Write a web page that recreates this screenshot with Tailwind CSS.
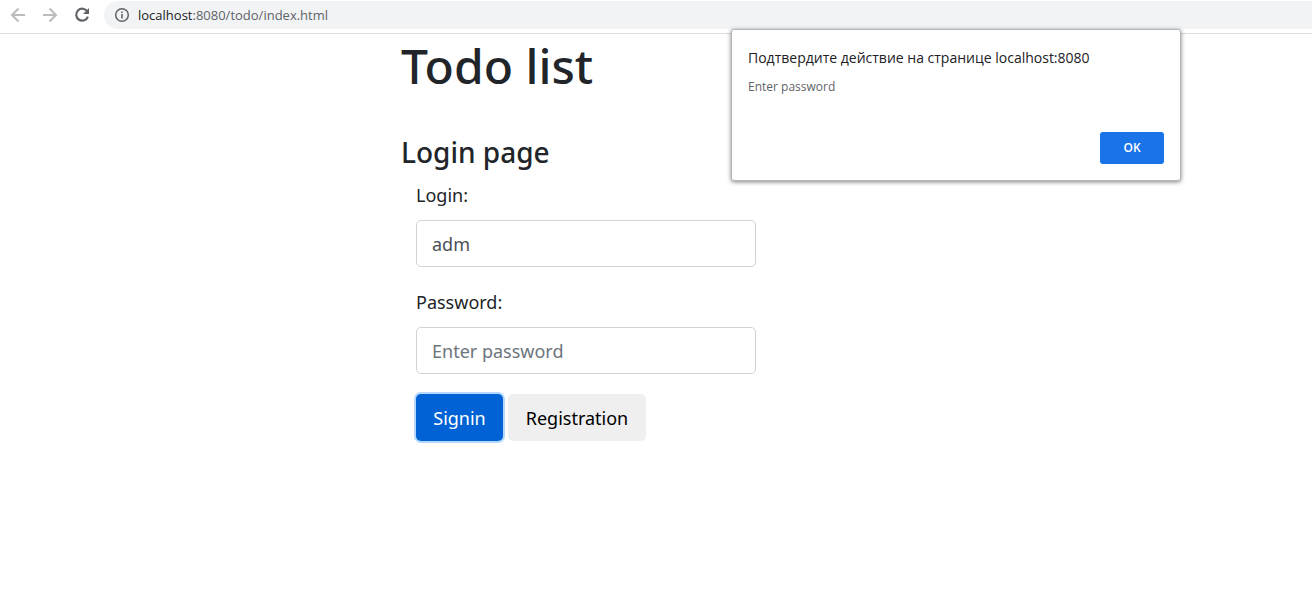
<!DOCTYPE html>
<html lang="en">
<head>
<meta charset="utf-8">
<meta name="viewport" content="width=device-width, initial-scale=1">
<title>Todo list</title>
<script src="https://cdn.jsdelivr.net/npm/@tailwindcss/browser@4"></script>
</head>
<body class="relative min-h-screen bg-white font-['Open_Sans','Noto_Sans',sans-serif] text-[#212529]">
<header class="flex h-[34px] items-start border-b border-[#dadce0] pt-px">
  <nav class="flex h-7 items-center gap-3 pl-2" aria-label="Browser">
    <button type="button" aria-label="Back" class="size-5 text-[#babcbe]">
      <svg viewBox="0 0 20 20" class="size-5" fill="none" stroke="currentColor" stroke-width="2"><path d="M17 10H4.500M10.500 3.500L4 10l6.500 6.500"/></svg>
    </button>
    <button type="button" aria-label="Forward" class="size-5 text-[#babcbe]">
      <svg viewBox="0 0 20 20" class="size-5" fill="none" stroke="currentColor" stroke-width="2"><path d="M3 10h12.500M9.500 3.500L16 10l-6.500 6.500"/></svg>
    </button>
    <button type="button" aria-label="Reload" class="size-5 text-[#5f6368]">
      <svg viewBox="0 0 20 20" class="size-5" fill="none"><path d="M15.300 6.500A6 6 0 1 0 15.900 11.600" stroke="currentColor" stroke-width="2.200"/><path d="M17 3v6h-6z" fill="currentColor"/></svg>
    </button>
  </nav>
  <div class="ml-3 flex h-7 flex-1 items-center gap-2 rounded-l-full bg-[#f1f3f4] pl-[10px]">
    <svg viewBox="0 0 16 16" class="size-4" fill="none" aria-hidden="true"><circle cx="8" cy="8" r="6.300" stroke="#5f6368" stroke-width="1.500"/><path d="M7.200 7h1.600v4.500H7.200zM7.200 4.400h1.600V6H7.200z" fill="#5f6368"/></svg>
    <a href="#" class="text-[13px] leading-5 text-[#5f6368]"><span class="text-[#202124]">localhost</span>:8080/todo/index.html</a>
  </div>
</header>

<main class="mx-auto max-w-[540px] px-[15px] font-['Noto_Sans','Open_Sans',sans-serif]">
  <h1 class="pt-[2px] text-[48px] leading-[60px] font-medium">Todo list</h1>
  <h2 class="pt-9 text-[28px] leading-10 font-medium">Login page</h2>
  <form class="ml-[15px] w-2/3 pt-2 text-[18px] leading-[30px]">
    <label for="login" class="mb-[10px] block">Login:</label>
    <input id="login" type="text" value="adm" class="mb-5 block h-[47px] w-full rounded-[5px] border border-[#ced4da] px-[15px] text-[#495057]">
    <label for="password" class="mb-[10px] block">Password:</label>
    <input id="password" type="password" placeholder="Enter password" class="mb-5 block h-[47px] w-full rounded-[5px] border border-[#ced4da] px-[15px] placeholder:text-[#6c757d]">
    <div class="flex gap-[5px]">
      <button type="button" class="h-[47px] w-[87px] rounded-[5px] bg-[#0062d4] text-white ring-2 ring-[#b3d7ff]">Signin</button>
      <button type="button" class="h-[47px] w-[138px] rounded-[5px] bg-[#efefef] text-black">Registration</button>
    </div>
  </form>
</main>

<section role="dialog" aria-labelledby="dialog-title" class="absolute top-[29px] right-[131px] w-[450px] rounded-[3px] border border-[#b4b6b8] bg-white px-4 pt-4 pb-4 shadow-[0_1px_4px_rgba(0,0,0,0.5)]">
  <h3 id="dialog-title" class="text-[14px] leading-6 text-[#202124]">Подтвердите действие на странице localhost:8080</h3>
  <p class="pt-[9px] text-[12px] leading-4 text-[#5f6368]">Enter password</p>
  <div class="flex justify-end pt-[37px]">
    <button type="button" class="h-8 w-16 rounded-[3px] bg-[#1a73e8] text-[12px] font-semibold text-white">OK</button>
  </div>
</section>
</body>
</html>
